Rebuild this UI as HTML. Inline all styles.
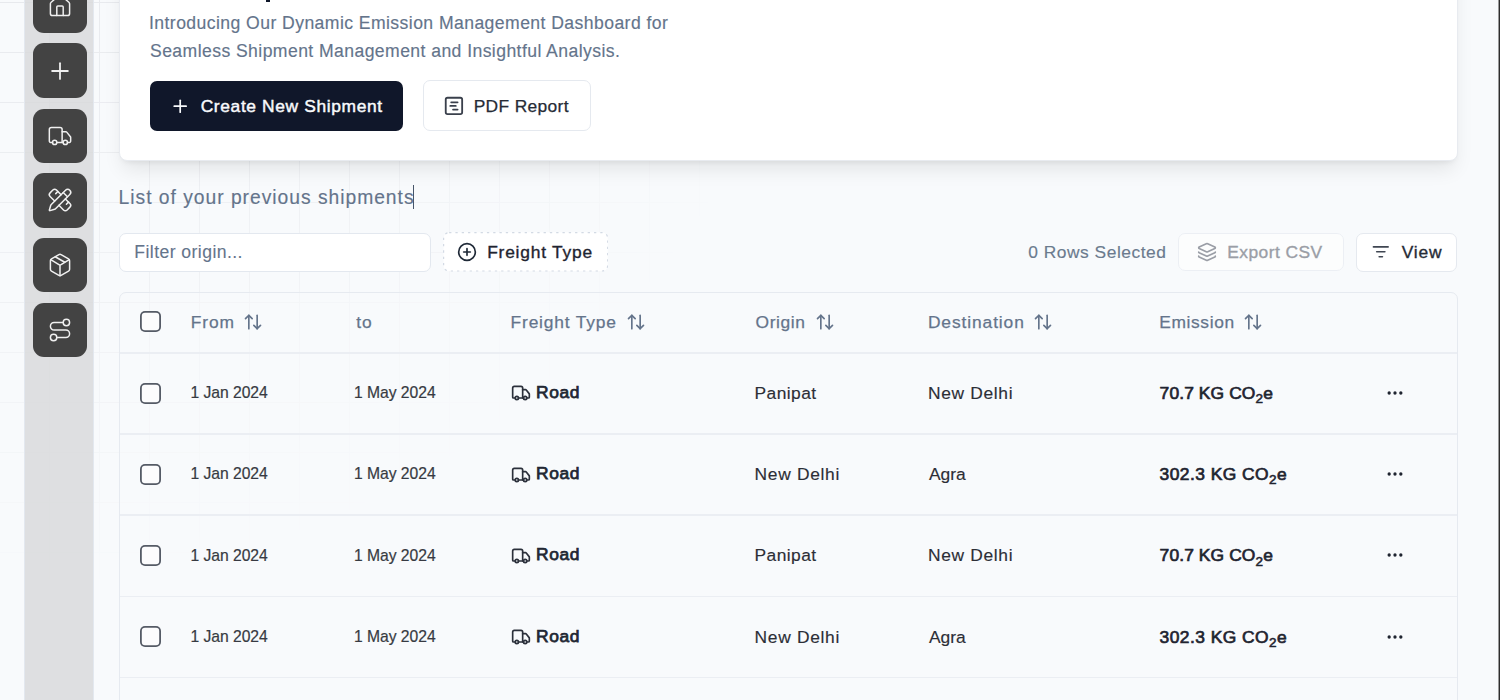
<!DOCTYPE html>
<html><head><meta charset="utf-8">
<style>
*{box-sizing:border-box;margin:0;padding:0}
html,body{width:1500px;height:700px;overflow:hidden}
body{position:relative;background:#f8fafc;font-family:"Liberation Sans",sans-serif;color:#1f2937}
.abs{position:absolute}
.grid{position:absolute;left:0;top:0;width:1500px;height:700px;
 background-image:linear-gradient(to right,#e7e9ed 1px,transparent 1px),linear-gradient(to bottom,#e7e9ed 1px,transparent 1px);
 background-size:50px 50px;background-position:49px 2px;
 -webkit-mask-image:radial-gradient(circle 860px at 0px -262px,#000 30%,transparent 100%);
 mask-image:radial-gradient(circle 860px at 0px -262px,#000 30%,transparent 100%)}
.sidebar{position:absolute;left:24px;top:0;width:69.5px;height:700px;background:rgba(215,216,218,.8);border-left:1px solid #e3e8ef;border-right:1px solid #e3e8ef}
.sbtn{position:absolute;left:33px;width:54px;height:54.5px;border-radius:11px;background:#434343}
.sbtn svg{position:absolute;left:50%;top:50%;transform:translate(-50%,-50%);width:25.6px;height:25.6px;fill:none;stroke:#f0f0f0;stroke-width:1.4;stroke-linecap:round;stroke-linejoin:round}
.card{position:absolute;left:119px;top:-300px;width:1338.5px;height:460.5px;background:#fff;border:1px solid #e8ebf0;border-radius:8px;
 box-shadow:0 12px 20px -4px rgba(0,0,0,.09),0 4px 6px -4px rgba(0,0,0,.09)}
.t{position:absolute;white-space:nowrap;line-height:1}
svg.ic{position:absolute;fill:none;stroke-linecap:round;stroke-linejoin:round}

.btn-dark{position:absolute;left:150.3px;top:80.8px;width:252.5px;height:50px;border-radius:7px;background:#10172a}
.btn-out{position:absolute;background:#fff;border:1px solid #e5e9ef;border-radius:7px}
.input{position:absolute;left:119px;top:232.7px;width:312px;height:39.3px;background:#fff;border:1px solid #e3e8ef;border-radius:7px}
.dashed{position:absolute;left:442.6px;top:232px;width:165.3px;height:39.6px;background:#fff;border:1px dashed #dfe4ec;border-radius:7px}
.table{position:absolute;left:119px;top:292px;width:1339px;height:600px;border:1.5px solid #e6eaf0;border-radius:7px;background:rgba(248,250,252,.35)}
.hl{position:absolute;left:120px;width:1337px;height:1.5px;background:#ebeef3}
.cb{position:absolute;left:139.7px;width:21px;height:21px;box-shadow:inset 0 0 0 1.8px #555b66;border-radius:5px;background:#fcfcfd}
.em{font-size:17.4px;font-weight:400;color:#1f2430;-webkit-text-stroke:0.7px #1f2430}
.em .sub{font-size:13.5px;position:relative;top:4.3px;-webkit-text-stroke:0.6px #1f2430}
.caret{position:absolute;left:412.6px;top:184.6px;width:1.3px;height:24.4px;background:#475569}
.rb{position:absolute;left:1498px;top:0;width:2px;height:700px;background:linear-gradient(to right,#9a9a9a 0,#9a9a9a 1px,#2d2d2d 1px)}
</style></head>
<body>
<div class="grid"></div>

<div class="sidebar"></div>
<div class="sbtn" style="top:-21.4px"><svg viewBox="0 0 24 24"><path d="M15 21v-8a1 1 0 0 0-1-1h-4a1 1 0 0 0-1 1v8"/><path d="M3 10a2 2 0 0 1 .709-1.528l7-5.999a2 2 0 0 1 2.582 0l7 5.999A2 2 0 0 1 21 10v9a2 2 0 0 1-2 2H5a2 2 0 0 1-2-2z"/></svg></div>
<div class="sbtn" style="top:43.4px"><svg viewBox="0 0 24 24" style="stroke-width:1.6;width:27px;height:27px"><path d="M5 12h14"/><path d="M12 5v14"/></svg></div>
<div class="sbtn" style="top:108.9px"><svg viewBox="0 0 24 24"><path d="M14 18V6a2 2 0 0 0-2-2H4a2 2 0 0 0-2 2v11a1 1 0 0 0 1 1h2"/><path d="M15 18H9"/><path d="M19 18h2a1 1 0 0 0 1-1v-3.65a1 1 0 0 0-.22-.624l-3.48-4.35A1 1 0 0 0 17.52 8H14"/><circle cx="17" cy="18" r="2"/><circle cx="7" cy="18" r="2"/></svg></div>
<div class="sbtn" style="top:173.1px"><svg viewBox="0 0 24 24"><path d="M13 7 8.7 2.7a2.41 2.41 0 0 0-3.4 0L2.7 5.3a2.41 2.41 0 0 0 0 3.4L7 13"/><path d="m8 6 2-2"/><path d="m18 16 2-2"/><path d="m17 11 4.3 4.3c.94.94.94 2.46 0 3.4l-2.6 2.6c-.94.94-2.46.94-3.4 0L11 17"/><path d="M21.174 6.812a1 1 0 0 0-3.986-3.987L3.842 16.174a2 2 0 0 0-.5.83l-1.321 4.352a.5.5 0 0 0 .623.622l4.353-1.32a2 2 0 0 0 .83-.497z"/><path d="m15 5 4 4"/></svg></div>
<div class="sbtn" style="top:237.8px"><svg viewBox="0 0 24 24"><path d="M11 21.73a2 2 0 0 0 2 0l7-4A2 2 0 0 0 21 16V8a2 2 0 0 0-1-1.73l-7-4a2 2 0 0 0-2 0l-7 4A2 2 0 0 0 3 8v8a2 2 0 0 0 1 1.73z"/><path d="M12 22V12"/><path d="m3.3 7 7.703 4.734a2 2 0 0 0 1.994 0L20.7 7"/><path d="m7.5 4.27 9 5.15"/></svg></div>
<div class="sbtn" style="top:302.6px"><svg viewBox="0 0 24 24"><circle cx="6" cy="19" r="3"/><path d="M9 19h8.5a3.5 3.5 0 0 0 0-7h-11a3.5 3.5 0 0 1 0-7H15"/><circle cx="18" cy="5" r="3"/></svg></div>

<div class="card"></div>
<div class="abs" style="left:266px;top:0;width:4px;height:2px;background:#0f172a"></div>


<div class="btn-dark"></div>
<div class="btn-out" style="left:422.7px;top:80.4px;width:168px;height:50.3px"></div>
<div class="caret"></div>
<div class="input"></div>
<svg class="abs" style="left:442.6px;top:232px;width:165.3px;height:39.6px" viewBox="0 0 165.3 39.6"><rect x="0.6" y="0.6" width="164.1" height="38.4" rx="5.5" fill="#fff" stroke="#d3dae4" stroke-width="1.2" stroke-dasharray="2.3 4"/></svg>
<div class="btn-out" style="left:1177.5px;top:233.2px;width:166px;height:38px;opacity:.6"></div>
<div class="btn-out" style="left:1355.5px;top:232.5px;width:101.8px;height:39.4px"></div>
<div class="table"></div>
<div class="hl" style="top:352.00px"></div>
<div class="hl" style="top:433.20px"></div>
<div class="hl" style="top:514.40px"></div>
<div class="hl" style="top:595.60px"></div>
<div class="hl" style="top:676.80px"></div>
<div class="cb" style="top:311.00px"></div>
<div class="cb" style="top:382.50px"></div>
<div class="cb" style="top:463.70px"></div>
<div class="cb" style="top:544.90px"></div>
<div class="cb" style="top:626.10px"></div>
<div class="t em" style="left:1159.6px;top:384.97px;letter-spacing:0.12px">70.7 KG CO<span class="sub">2</span>e</div>
<div class="t em" style="left:1159.6px;top:466.17px;letter-spacing:0.46px">302.3 KG CO<span class="sub">2</span>e</div>
<div class="t em" style="left:1159.6px;top:547.37px;letter-spacing:0.12px">70.7 KG CO<span class="sub">2</span>e</div>
<div class="t em" style="left:1159.6px;top:628.57px;letter-spacing:0.46px">302.3 KG CO<span class="sub">2</span>e</div>
<svg class="ic" style="left:170.00px;top:95.60px;width:20.4px;height:20.4px;stroke:#f8fafc;stroke-width:2" viewBox="0 0 24 24"><path d="M5 12h14"/><path d="M12 5v14"/></svg>
<svg class="ic" style="left:443.30px;top:94.50px;width:21.9px;height:21.9px;stroke:#3a404c;stroke-width:2" viewBox="0 0 24 24"><rect width="18" height="18" x="3" y="3" rx="2"/><path d="M9 8h7"/><path d="M8 12h6"/><path d="M11 16h5"/></svg>
<svg class="ic" style="left:457.30px;top:241.90px;width:20px;height:20px;stroke:#1f2937;stroke-width:2" viewBox="0 0 24 24"><circle cx="12" cy="12" r="10"/><path d="M8 12h8"/><path d="M12 8v8"/></svg>
<svg class="ic" style="left:1197.40px;top:241.90px;width:20px;height:20px;stroke:#9a9ea6;stroke-width:2" viewBox="0 0 24 24"><path d="M12.83 2.18a2 2 0 0 0-1.66 0L2.6 6.08a1 1 0 0 0 0 1.83l8.58 3.91a2 2 0 0 0 1.66 0l8.58-3.9a1 1 0 0 0 0-1.83z"/><path d="M2 12a1 1 0 0 0 .58.91l8.6 3.91a2 2 0 0 0 1.65 0l8.58-3.9A1 1 0 0 0 22 12"/><path d="M2 17a1 1 0 0 0 .58.91l8.6 3.91a2 2 0 0 0 1.65 0l8.58-3.9A1 1 0 0 0 22 17"/></svg>
<svg class="ic" style="left:1371.20px;top:242.40px;width:19.6px;height:19.6px;stroke:#3f4652;stroke-width:2" viewBox="0 0 24 24"><path d="M3 6h18"/><path d="M7 12h10"/><path d="M10 18h4"/></svg>
<svg class="ic" style="left:243.23px;top:312.00px;width:20px;height:20px;stroke:#64748b;stroke-width:2.0" viewBox="0 0 24 24"><path d="m21 16-4 4-4-4"/><path d="M17 20V4"/><path d="m3 8 4-4 4 4"/><path d="M7 4v16"/></svg>
<svg class="ic" style="left:625.53px;top:312.00px;width:20px;height:20px;stroke:#64748b;stroke-width:2.0" viewBox="0 0 24 24"><path d="m21 16-4 4-4-4"/><path d="M17 20V4"/><path d="m3 8 4-4 4 4"/><path d="M7 4v16"/></svg>
<svg class="ic" style="left:814.83px;top:312.00px;width:20px;height:20px;stroke:#64748b;stroke-width:2.0" viewBox="0 0 24 24"><path d="m21 16-4 4-4-4"/><path d="M17 20V4"/><path d="m3 8 4-4 4 4"/><path d="M7 4v16"/></svg>
<svg class="ic" style="left:1033.23px;top:312.00px;width:20px;height:20px;stroke:#64748b;stroke-width:2.0" viewBox="0 0 24 24"><path d="m21 16-4 4-4-4"/><path d="M17 20V4"/><path d="m3 8 4-4 4 4"/><path d="M7 4v16"/></svg>
<svg class="ic" style="left:1243.23px;top:312.00px;width:20px;height:20px;stroke:#64748b;stroke-width:2.0" viewBox="0 0 24 24"><path d="m21 16-4 4-4-4"/><path d="M17 20V4"/><path d="m3 8 4-4 4 4"/><path d="M7 4v16"/></svg>
<svg class="ic" style="left:510.90px;top:383.30px;width:20px;height:20px;stroke:#2b303b;stroke-width:2" viewBox="0 0 24 24"><path d="M14 18V6a2 2 0 0 0-2-2H4a2 2 0 0 0-2 2v11a1 1 0 0 0 1 1h2"/><path d="M15 18H9"/><path d="M19 18h2a1 1 0 0 0 1-1v-3.65a1 1 0 0 0-.22-.624l-3.48-4.35A1 1 0 0 0 17.52 8H14"/><circle cx="17" cy="18" r="2"/><circle cx="7" cy="18" r="2"/></svg>
<svg class="ic" style="left:1385.00px;top:383.00px;width:20px;height:20px;stroke:#1f2430;stroke-width:2" viewBox="0 0 24 24"><circle cx="12" cy="12" r="1"/><circle cx="19" cy="12" r="1"/><circle cx="5" cy="12" r="1"/></svg>
<svg class="ic" style="left:510.90px;top:464.50px;width:20px;height:20px;stroke:#2b303b;stroke-width:2" viewBox="0 0 24 24"><path d="M14 18V6a2 2 0 0 0-2-2H4a2 2 0 0 0-2 2v11a1 1 0 0 0 1 1h2"/><path d="M15 18H9"/><path d="M19 18h2a1 1 0 0 0 1-1v-3.65a1 1 0 0 0-.22-.624l-3.48-4.35A1 1 0 0 0 17.52 8H14"/><circle cx="17" cy="18" r="2"/><circle cx="7" cy="18" r="2"/></svg>
<svg class="ic" style="left:1385.00px;top:464.20px;width:20px;height:20px;stroke:#1f2430;stroke-width:2" viewBox="0 0 24 24"><circle cx="12" cy="12" r="1"/><circle cx="19" cy="12" r="1"/><circle cx="5" cy="12" r="1"/></svg>
<svg class="ic" style="left:510.90px;top:545.70px;width:20px;height:20px;stroke:#2b303b;stroke-width:2" viewBox="0 0 24 24"><path d="M14 18V6a2 2 0 0 0-2-2H4a2 2 0 0 0-2 2v11a1 1 0 0 0 1 1h2"/><path d="M15 18H9"/><path d="M19 18h2a1 1 0 0 0 1-1v-3.65a1 1 0 0 0-.22-.624l-3.48-4.35A1 1 0 0 0 17.52 8H14"/><circle cx="17" cy="18" r="2"/><circle cx="7" cy="18" r="2"/></svg>
<svg class="ic" style="left:1385.00px;top:545.40px;width:20px;height:20px;stroke:#1f2430;stroke-width:2" viewBox="0 0 24 24"><circle cx="12" cy="12" r="1"/><circle cx="19" cy="12" r="1"/><circle cx="5" cy="12" r="1"/></svg>
<svg class="ic" style="left:510.90px;top:626.90px;width:20px;height:20px;stroke:#2b303b;stroke-width:2" viewBox="0 0 24 24"><path d="M14 18V6a2 2 0 0 0-2-2H4a2 2 0 0 0-2 2v11a1 1 0 0 0 1 1h2"/><path d="M15 18H9"/><path d="M19 18h2a1 1 0 0 0 1-1v-3.65a1 1 0 0 0-.22-.624l-3.48-4.35A1 1 0 0 0 17.52 8H14"/><circle cx="17" cy="18" r="2"/><circle cx="7" cy="18" r="2"/></svg>
<svg class="ic" style="left:1385.00px;top:626.60px;width:20px;height:20px;stroke:#1f2430;stroke-width:2" viewBox="0 0 24 24"><circle cx="12" cy="12" r="1"/><circle cx="19" cy="12" r="1"/><circle cx="5" cy="12" r="1"/></svg>
<div class="t" style="left:149.00px;top:15.40px;font-size:17.6px;font-weight:400;color:#64748b;letter-spacing:0.429px;-webkit-text-stroke:0.15px #64748b">Introducing Our Dynamic Emission Management Dashboard for</div>
<div class="t" style="left:150.00px;top:43.40px;font-size:17.6px;font-weight:400;color:#64748b;letter-spacing:0.423px;-webkit-text-stroke:0.15px #64748b">Seamless Shipment Management and Insightful Analysis.</div>
<div class="t" style="left:200.70px;top:97.77px;font-size:17.4px;font-weight:400;color:#f8fafc;letter-spacing:0.628px;-webkit-text-stroke:0.45px #f8fafc">Create New Shipment</div>
<div class="t" style="left:473.70px;top:97.77px;font-size:17.4px;font-weight:400;color:#262b36;letter-spacing:0.336px;-webkit-text-stroke:0.25px #262b36">PDF Report</div>
<div class="t" style="left:118.60px;top:188.26px;font-size:19.3px;font-weight:400;color:#64748b;letter-spacing:0.972px;-webkit-text-stroke:0.15px #64748b">List of your previous shipments</div>
<div class="t" style="left:134.30px;top:243.70px;font-size:17.6px;font-weight:400;color:#64748b;letter-spacing:0.434px;-webkit-text-stroke:0.1px #64748b">Filter origin...</div>
<div class="t" style="left:487.20px;top:244.27px;font-size:17.4px;font-weight:400;color:#1f2430;letter-spacing:0.783px;-webkit-text-stroke:0.35px #1f2430">Freight Type</div>
<div class="t" style="left:1028.20px;top:244.27px;font-size:17.4px;font-weight:400;color:#6b7a8e;letter-spacing:0.512px;-webkit-text-stroke:0.15px #6b7a8e">0 Rows Selected</div>
<div class="t" style="left:1227.20px;top:244.07px;font-size:17.4px;font-weight:400;color:#9a9ea6;letter-spacing:0.461px;-webkit-text-stroke:0.35px #9a9ea6">Export CSV</div>
<div class="t" style="left:1401.70px;top:243.57px;font-size:17.4px;font-weight:400;color:#262b36;letter-spacing:0.793px;-webkit-text-stroke:0.35px #262b36">View</div>
<div class="t" style="left:190.80px;top:313.67px;font-size:17.4px;font-weight:400;color:#64748b;letter-spacing:0.871px;-webkit-text-stroke:0.25px #64748b">From</div>
<div class="t" style="left:356.23px;top:313.67px;font-size:17.4px;font-weight:400;color:#64748b;letter-spacing:1.000px;-webkit-text-stroke:0.25px #64748b">to</div>
<div class="t" style="left:510.60px;top:313.67px;font-size:17.4px;font-weight:400;color:#64748b;letter-spacing:0.810px;-webkit-text-stroke:0.25px #64748b">Freight Type</div>
<div class="t" style="left:755.60px;top:313.67px;font-size:17.4px;font-weight:400;color:#64748b;letter-spacing:0.597px;-webkit-text-stroke:0.25px #64748b">Origin</div>
<div class="t" style="left:927.90px;top:313.67px;font-size:17.4px;font-weight:400;color:#64748b;letter-spacing:0.897px;-webkit-text-stroke:0.25px #64748b">Destination</div>
<div class="t" style="left:1159.20px;top:313.67px;font-size:17.4px;font-weight:400;color:#64748b;letter-spacing:0.632px;-webkit-text-stroke:0.25px #64748b">Emission</div>
<div class="t" style="left:190.60px;top:385.21px;font-size:15.7px;font-weight:400;color:#373a42;letter-spacing:-0.057px;-webkit-text-stroke:0.2px #373a42">1 Jan 2024</div>
<div class="t" style="left:353.90px;top:385.21px;font-size:15.7px;font-weight:400;color:#373a42;letter-spacing:-0.028px;-webkit-text-stroke:0.2px #373a42">1 May 2024</div>
<div class="t" style="left:536.00px;top:384.07px;font-size:17.4px;font-weight:400;color:#222733;letter-spacing:0.599px;-webkit-text-stroke:0.75px #222733">Road</div>
<div class="t" style="left:754.60px;top:385.07px;font-size:17.4px;font-weight:400;color:#2c2e36;letter-spacing:0.425px;-webkit-text-stroke:0.15px #2c2e36">Panipat</div>
<div class="t" style="left:927.90px;top:385.07px;font-size:17.4px;font-weight:400;color:#2c2e36;letter-spacing:0.677px;-webkit-text-stroke:0.15px #2c2e36">New Delhi</div>
<div class="t" style="left:190.60px;top:466.41px;font-size:15.7px;font-weight:400;color:#373a42;letter-spacing:-0.057px;-webkit-text-stroke:0.2px #373a42">1 Jan 2024</div>
<div class="t" style="left:353.90px;top:466.41px;font-size:15.7px;font-weight:400;color:#373a42;letter-spacing:-0.028px;-webkit-text-stroke:0.2px #373a42">1 May 2024</div>
<div class="t" style="left:536.00px;top:465.27px;font-size:17.4px;font-weight:400;color:#222733;letter-spacing:0.599px;-webkit-text-stroke:0.75px #222733">Road</div>
<div class="t" style="left:754.60px;top:466.27px;font-size:17.4px;font-weight:400;color:#2c2e36;letter-spacing:0.677px;-webkit-text-stroke:0.15px #2c2e36">New Delhi</div>
<div class="t" style="left:928.90px;top:466.27px;font-size:17.4px;font-weight:400;color:#2c2e36;letter-spacing:0.013px;-webkit-text-stroke:0.15px #2c2e36">Agra</div>
<div class="t" style="left:190.60px;top:547.61px;font-size:15.7px;font-weight:400;color:#373a42;letter-spacing:-0.057px;-webkit-text-stroke:0.2px #373a42">1 Jan 2024</div>
<div class="t" style="left:353.90px;top:547.61px;font-size:15.7px;font-weight:400;color:#373a42;letter-spacing:-0.028px;-webkit-text-stroke:0.2px #373a42">1 May 2024</div>
<div class="t" style="left:536.00px;top:546.47px;font-size:17.4px;font-weight:400;color:#222733;letter-spacing:0.599px;-webkit-text-stroke:0.75px #222733">Road</div>
<div class="t" style="left:754.60px;top:547.47px;font-size:17.4px;font-weight:400;color:#2c2e36;letter-spacing:0.425px;-webkit-text-stroke:0.15px #2c2e36">Panipat</div>
<div class="t" style="left:927.90px;top:547.47px;font-size:17.4px;font-weight:400;color:#2c2e36;letter-spacing:0.677px;-webkit-text-stroke:0.15px #2c2e36">New Delhi</div>
<div class="t" style="left:190.60px;top:628.81px;font-size:15.7px;font-weight:400;color:#373a42;letter-spacing:-0.057px;-webkit-text-stroke:0.2px #373a42">1 Jan 2024</div>
<div class="t" style="left:353.90px;top:628.81px;font-size:15.7px;font-weight:400;color:#373a42;letter-spacing:-0.028px;-webkit-text-stroke:0.2px #373a42">1 May 2024</div>
<div class="t" style="left:536.00px;top:627.67px;font-size:17.4px;font-weight:400;color:#222733;letter-spacing:0.599px;-webkit-text-stroke:0.75px #222733">Road</div>
<div class="t" style="left:754.60px;top:628.67px;font-size:17.4px;font-weight:400;color:#2c2e36;letter-spacing:0.677px;-webkit-text-stroke:0.15px #2c2e36">New Delhi</div>
<div class="t" style="left:928.90px;top:628.67px;font-size:17.4px;font-weight:400;color:#2c2e36;letter-spacing:0.013px;-webkit-text-stroke:0.15px #2c2e36">Agra</div>
<div class="rb"></div>
</body></html>
